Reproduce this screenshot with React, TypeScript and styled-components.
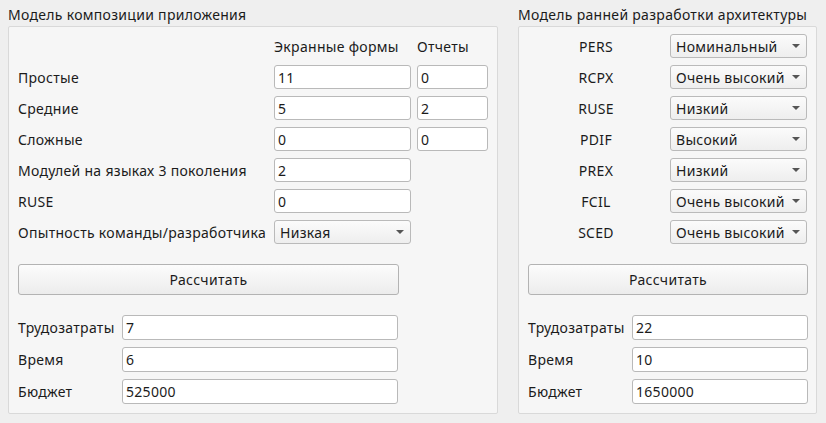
import React from "react";
import styled, { createGlobalStyle } from "styled-components";

const Global = createGlobalStyle`
  html, body { margin: 0; padding: 0; background: #efefef; }
  body { font-family: "Noto Sans", "Open Sans", sans-serif; font-size: 14px; letter-spacing: 0.3px; color: #1b1b1b; }
  * { box-sizing: border-box; }
`;

const Page = styled.div`
  display: flex;
  gap: 20px;
  padding: 5px 9px 0 8px;
  width: 826px;
  height: 423px;
`;

const Group = styled.section<{ $w: number }>`
  width: ${(p) => p.$w}px;
  display: flex;
  flex-direction: column;
`;

const Title = styled.div`
  height: 21px;
  line-height: 19px;
  padding-left: 0;
  white-space: nowrap;
`;

const Frame = styled.div`
  flex: none;
  height: 388px;
  background: #f6f6f6;
  border: 1px solid #d9d9d9;
  border-radius: 2px;
  padding: 7px 9px 9px 9px;
  display: flex;
  flex-direction: column;
`;

const FormGrid = styled.div<{ $cols: string }>`
  display: grid;
  grid-template-columns: ${(p) => p.$cols};
  grid-auto-rows: 24px;
  column-gap: 6px;
  row-gap: 7px;
  align-items: center;
`;

const Label = styled.div<{ $center?: boolean }>`
  white-space: nowrap;
  text-align: ${(p) => (p.$center ? "center" : "left")};
`;

const Input = styled.div<{ $h?: number }>`
  height: ${(p) => p.$h ?? 24}px;
  background: #ffffff;
  border: 1px solid #b9b9b9;
  border-radius: 3px;
  padding: 0 3px;
  display: flex;
  align-items: center;
  white-space: nowrap;
`;

const Combo = styled.div`
  height: 24px;
  background: linear-gradient(#fbfbfb, #eeeeee);
  border: 1px solid #bababa;
  border-radius: 3px;
  padding: 0 6px 0 5px;
  display: flex;
  align-items: center;
  justify-content: space-between;
  white-space: nowrap;
`;

const Arrow = styled.span`
  width: 0;
  height: 0;
  border-left: 4px solid transparent;
  border-right: 4px solid transparent;
  border-top: 4px solid #555;
  flex: none;
`;

const Button = styled.div`
  margin-top: 20px;
  height: 31px;
  background: linear-gradient(#fcfcfc, #ececec);
  border: 1px solid #b3b3b3;
  border-radius: 3px;
  display: flex;
  align-items: center;
  justify-content: center;
`;

const ButtonWrap = styled.div<{ $w: number }>`
  width: ${(p) => p.$w}px;
`;

const Results = styled.div<{ $cols: string; $w: number }>`
  margin-top: 20px;
  width: ${(p) => p.$w}px;
  display: grid;
  grid-template-columns: ${(p) => p.$cols};
  grid-auto-rows: 25px;
  column-gap: 0;
  row-gap: 7px;
  align-items: center;
`;

const Header = styled.div`
  white-space: nowrap;
`;

const Empty = styled.div``;

const ComboBox = ({ value }: { value: string }) => (
  <Combo>
    <span>{value}</span>
    <Arrow />
  </Combo>
);

export default function App() {
  const left = [
    ["Простые", "11", "0"],
    ["Средние", "5", "2"],
    ["Сложные", "0", "0"],
  ];
  const right = [
    ["PERS", "Номинальный"],
    ["RCPX", "Очень высокий"],
    ["RUSE", "Низкий"],
    ["PDIF", "Высокий"],
    ["PREX", "Низкий"],
    ["FCIL", "Очень высокий"],
    ["SCED", "Очень высокий"],
  ];
  return (
    <>
      <Global />
      <Page>
        <Group $w={490}>
          <Title>Модель композиции приложения</Title>
          <Frame>
            <FormGrid $cols="250px 137px 71px">
              <Empty />
              <Header>Экранные формы</Header>
              <Header>Отчеты</Header>
              {left.map(([l, a, b]) => (
                <React.Fragment key={l}>
                  <Label>{l}</Label>
                  <Input>{a}</Input>
                  <Input>{b}</Input>
                </React.Fragment>
              ))}
              <Label>Модулей на языках 3 поколения</Label>
              <Input>2</Input>
              <Empty />
              <Label>RUSE</Label>
              <Input>0</Input>
              <Empty />
              <Label>Опытность команды/разработчика</Label>
              <ComboBox value="Низкая" />
              <Empty />
            </FormGrid>
            <ButtonWrap $w={381}>
              <Button>Рассчитать</Button>
            </ButtonWrap>
            <Results $cols="104px 276px" $w={380}>
              <Label>Трудозатраты</Label>
              <Input $h={25}>7</Input>
              <Label>Время</Label>
              <Input $h={25}>6</Input>
              <Label>Бюджет</Label>
              <Input $h={25}>525000</Input>
            </Results>
          </Frame>
        </Group>
        <Group $w={299}>
          <Title>Модель ранней разработки архитектуры</Title>
          <Frame>
            <FormGrid $cols="136px 137px">
              {right.map(([l, v]) => (
                <React.Fragment key={l}>
                  <Label $center>{l}</Label>
                  <ComboBox value={v} />
                </React.Fragment>
              ))}
            </FormGrid>
            <ButtonWrap $w={280}>
              <Button>Рассчитать</Button>
            </ButtonWrap>
            <Results $cols="104px 176px" $w={280}>
              <Label>Трудозатраты</Label>
              <Input $h={25}>22</Input>
              <Label>Время</Label>
              <Input $h={25}>10</Input>
              <Label>Бюджет</Label>
              <Input $h={25}>1650000</Input>
            </Results>
          </Frame>
        </Group>
      </Page>
    </>
  );
}
